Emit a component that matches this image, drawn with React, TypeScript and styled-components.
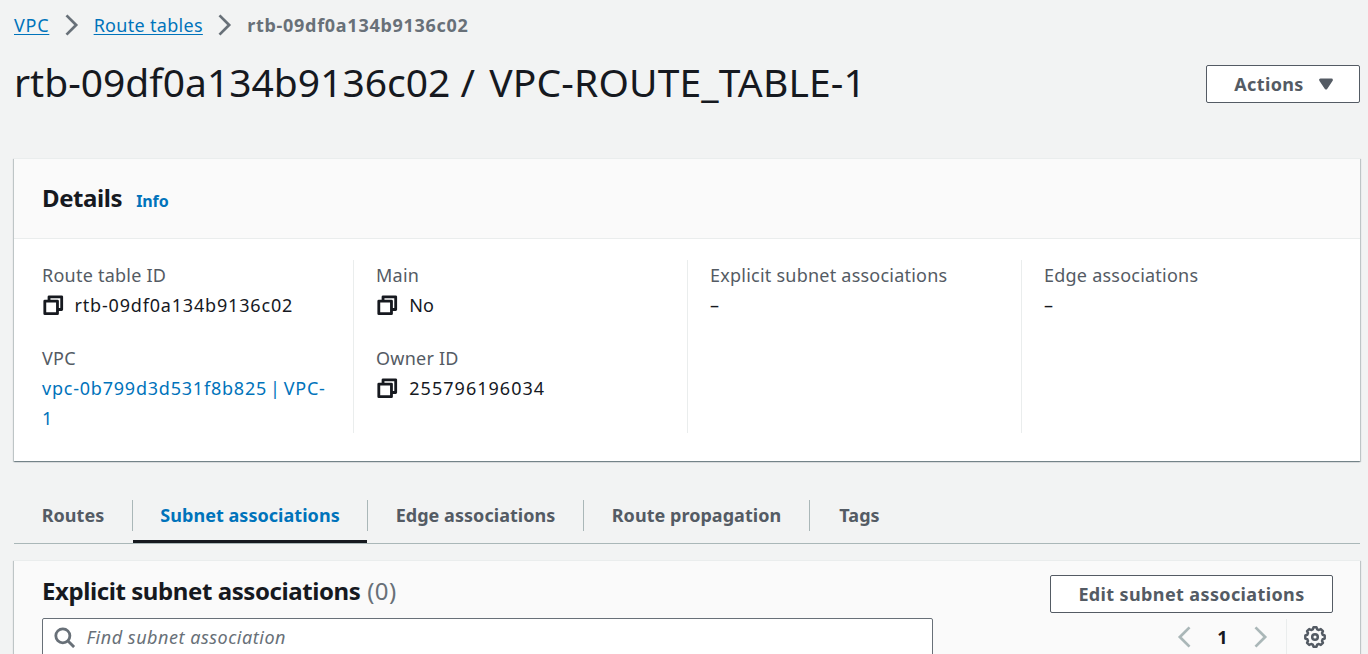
import React from 'react';
import styled, { createGlobalStyle } from 'styled-components';

const Global = createGlobalStyle`
  * { box-sizing: border-box; }
  html, body { margin: 0; background: #f2f3f3; }
  body { height: 654px; overflow: hidden; font: 400 18px/30px "Noto Sans", "Open Sans", sans-serif; color: #16191f; }
  h1, h2, p, dl, dt, dd { margin: 0; }
  svg { display: block; flex: none; fill: none; stroke: currentColor; }
`;

const Page = styled.main`
  display: flex;
  flex-direction: column;
  width: 1368px;
  height: 654px;
  padding: 10px 8px 0 14px;
  overflow: hidden;
`;

const Breadcrumbs = styled.nav`
  display: flex;
  flex: none;
  align-items: center;
  height: 30px;
  color: #687078;
`;

const Crumb = styled.a<{ $spacing: number }>`
  color: #0073bb;
  letter-spacing: ${(p) => p.$spacing}px;
  text-decoration: underline;
  text-decoration-thickness: 1px;
  text-underline-offset: 2px;
`;

const CurrentCrumb = styled.span`
  font-weight: 700;
  letter-spacing: 0.72px;
`;

const CrumbSeparator = styled.span`
  padding: 0 10.8px 0 11.5px;
`;

const TitleRow = styled.header`
  display: flex;
  flex: none;
  align-items: flex-start;
  justify-content: space-between;
  height: 118px;
  padding-top: 25px;
`;

const Title = styled.h1`
  margin-top: -8px;
  font-size: 39px;
  font-weight: 400;
  line-height: 50px;
`;

const TitleSlash = styled.span`
  margin-right: 4px;
`;

const TitleName = styled.span`
  letter-spacing: 0.14px;
`;

const Button = styled.button`
  display: flex;
  align-items: center;
  justify-content: center;
  height: 38px;
  padding: 0 27px;
  border: 1px solid #545b64;
  border-radius: 2px;
  background: #fff;
  color: #545b64;
  font: inherit;
  font-weight: 700;
  letter-spacing: 0.38px;
  white-space: nowrap;
`;

const ActionsButton = styled(Button)`
  width: 154px;
  gap: 11px;
  padding: 0 18px 0 23px;
`;

const Panel = styled.section`
  flex: none;
  width: 1346px;
  border-top: 1px solid #eaeded;
  background: #fff;
  box-shadow:
    0 1px 1px 0 rgba(0, 28, 36, 0.3),
    1px 1px 1px 0 rgba(0, 28, 36, 0.17),
    -1px 1px 1px 0 rgba(0, 28, 36, 0.17);
`;

const DetailsHeader = styled.div`
  display: flex;
  align-items: baseline;
  gap: 14px;
  height: 80px;
  padding: 21px 28px 0;
  border-bottom: 1px solid #eaeded;
  background: #fafafa;
`;

const PanelTitle = styled.h2`
  font-size: 24px;
  font-weight: 700;
  line-height: 36px;
  letter-spacing: -0.42px;
`;

const InfoLink = styled.a`
  color: #0073bb;
  font-size: 16px;
  font-weight: 700;
  letter-spacing: -0.1px;
`;

const Columns = styled.div`
  display: grid;
  grid-template-columns: 339px 334px 334px 1fr;
  height: 222px;
  padding: 21px 0 29px;
`;

const Column = styled.dl<{ $first?: boolean }>`
  display: flex;
  flex-direction: column;
  gap: 23px;
  padding-left: ${(p) => (p.$first ? 28 : 22)}px;
  padding-right: 22px;
  border-left: ${(p) => (p.$first ? 'none' : '1px solid #eaeded')};
`;

const Label = styled.dt`
  color: #545b64;
  letter-spacing: 0.23px;
`;

const Value = styled.dd<{ $spacing?: number }>`
  display: flex;
  align-items: center;
  gap: ${(p) => (p.$spacing === 0.82 ? 10 : 10.8)}px;
  letter-spacing: ${(p) => p.$spacing ?? 0}px;
`;

const ValueLink = styled.a`
  display: block;
  width: 296px;
  color: #0073bb;
  letter-spacing: 0.78px;
  word-spacing: -2.5px;
`;

const Tabs = styled.nav`
  display: flex;
  flex: none;
  height: 52px;
  margin: 31px 0 16px;
  border-bottom: 1px solid #aab7b8;
`;

const Tab = styled.a<{ $active?: boolean; $width: number }>`
  display: flex;
  justify-content: center;
  width: ${(p) => p.$width}px;
  height: 51px;
  padding-top: 8px;
  border-bottom: 3px solid ${(p) => (p.$active ? '#16191f' : 'transparent')};
  color: ${(p) => (p.$active ? '#0073bb' : '#545b64')};
  font-weight: 700;
  letter-spacing: 0.04px;
  white-space: nowrap;
`;

const TabDivider = styled.span`
  width: 1px;
  height: 31px;
  margin-top: 8px;
  background: #aab7b8;
`;

const ListHeader = styled.div`
  display: flex;
  justify-content: space-between;
  height: 94px;
  padding: 0 27px 0 28px;
  background: #fafafa;
`;

const SearchColumn = styled.div`
  width: 891px;
  padding-top: 12px;
`;

const ListTitle = styled(PanelTitle)`
  margin-bottom: 9px;
`;

const Counter = styled.span`
  margin-left: 1px;
  color: #687078;
  font-weight: 400;
  letter-spacing: 0.5px;
`;

const SearchField = styled.label`
  display: flex;
  align-items: center;
  gap: 11px;
  height: 38px;
  padding-left: 10px;
  border: 1px solid #687078;
  border-radius: 2px;
  background: #fff;
  color: #687078;
  font-style: italic;
  letter-spacing: 0.52px;
`;

const Controls = styled.div`
  display: flex;
  flex-direction: column;
  width: 283px;
  padding-top: 14px;
`;

const Pager = styled.div`
  display: flex;
  align-items: center;
  justify-content: flex-end;
  height: 36px;
  margin-top: 6px;
  padding-right: 6px;
  color: #aab7b8;
`;

const PageNumber = styled.span`
  width: 55px;
  color: #16191f;
  font-weight: 700;
  text-align: center;
`;

const Preferences = styled.span`
  display: flex;
  align-items: center;
  height: 36px;
  margin-left: 14px;
  padding-left: 16px;
  border-left: 1px solid #eaeded;
  color: #545b64;
`;

const Angle = ({ left }: { left?: boolean }) => (
  <svg width="22" height="22" viewBox="0 0 16 16" strokeWidth="2">
    <path d={left ? 'M12 1 5 8l7 7' : 'm4 1 7 7-7 7'} />
  </svg>
);

const CopyIcon = () => (
  <svg width="22.5" height="22.5" viewBox="0 0 16 16" strokeWidth="2" strokeLinejoin="round">
    <path d="M2 5h9v9H2z" />
    <path d="M5 5V2h9v9h-3" />
  </svg>
);

const SearchIcon = () => (
  <svg width="22.5" height="22.5" viewBox="0 0 16 16" strokeWidth="2">
    <circle cx="7" cy="7" r="5" />
    <path d="m15 15-4.5-4.5" />
  </svg>
);

const CaretIcon = () => (
  <svg width="22" height="22" viewBox="0 0 16 16" strokeWidth="2" strokeLinejoin="round">
    <path d="M4 5h8l-4 6-4-6z" fill="currentColor" />
  </svg>
);

const gearOutline = Array.from({ length: 8 }, (_, i) => {
  const at = (deg: number, r: number) => {
    const a = ((i * 45 + deg - 90) * Math.PI) / 180;
    return `${(12 + r * Math.cos(a)).toFixed(2)} ${(12 + r * Math.sin(a)).toFixed(2)}`;
  };
  return `${at(-16, 8)}L${at(-9, 9.8)}L${at(9, 9.8)}L${at(16, 8)}`;
}).join('L');

const GearIcon = () => (
  <svg width="24" height="24" viewBox="0 0 24 24" strokeWidth="2.5" strokeLinejoin="round">
    <path d={`M${gearOutline}Z`} />
    <circle cx="12" cy="12" r="2.8" />
  </svg>
);

export default function App() {
  return (
    <>
      <Global />
      <Page>
        <Breadcrumbs>
          <Crumb $spacing={0.75}>VPC</Crumb>
          <CrumbSeparator><Angle /></CrumbSeparator>
          <Crumb $spacing={0.3}>Route tables</Crumb>
          <CrumbSeparator><Angle /></CrumbSeparator>
          <CurrentCrumb>rtb-09df0a134b9136c02</CurrentCrumb>
        </Breadcrumbs>

        <TitleRow>
          <Title>
            rtb-09df0a134b9136c02 <TitleSlash>/</TitleSlash> <TitleName>VPC-ROUTE_TABLE-1</TitleName>
          </Title>
          <ActionsButton>Actions<CaretIcon /></ActionsButton>
        </TitleRow>

        <Panel>
          <DetailsHeader>
            <PanelTitle>Details</PanelTitle>
            <InfoLink>Info</InfoLink>
          </DetailsHeader>
          <Columns>
            <Column $first>
              <div>
                <Label>Route table ID</Label>
                <Value $spacing={0.82}><CopyIcon />rtb-09df0a134b9136c02</Value>
              </div>
              <div>
                <Label>VPC</Label>
                <Value><ValueLink>vpc-0b799d3d531f8b825 | VPC-1</ValueLink></Value>
              </div>
            </Column>
            <Column>
              <div>
                <Label>Main</Label>
                <Value><CopyIcon />No</Value>
              </div>
              <div>
                <Label>Owner ID</Label>
                <Value $spacing={1.02}><CopyIcon />255796196034</Value>
              </div>
            </Column>
            <Column>
              <div>
                <Label>Explicit subnet associations</Label>
                <Value>–</Value>
              </div>
            </Column>
            <Column>
              <div>
                <Label>Edge associations</Label>
                <Value>–</Value>
              </div>
            </Column>
          </Columns>
        </Panel>

        <Tabs>
          <Tab $width={118}>Routes</Tab>
          <TabDivider />
          <Tab $width={234} $active>Subnet associations</Tab>
          <TabDivider />
          <Tab $width={215}>Edge associations</Tab>
          <TabDivider />
          <Tab $width={225}>Route propagation</Tab>
          <TabDivider />
          <Tab $width={99}>Tags</Tab>
        </Tabs>

        <Panel>
          <ListHeader>
            <SearchColumn>
              <ListTitle>Explicit subnet associations <Counter>(0)</Counter></ListTitle>
              <SearchField><SearchIcon />Find subnet association</SearchField>
            </SearchColumn>
            <Controls>
              <Button>Edit subnet associations</Button>
              <Pager>
                <Angle left />
                <PageNumber>1</PageNumber>
                <Angle />
                <Preferences><GearIcon /></Preferences>
              </Pager>
            </Controls>
          </ListHeader>
        </Panel>
      </Page>
    </>
  );
}
